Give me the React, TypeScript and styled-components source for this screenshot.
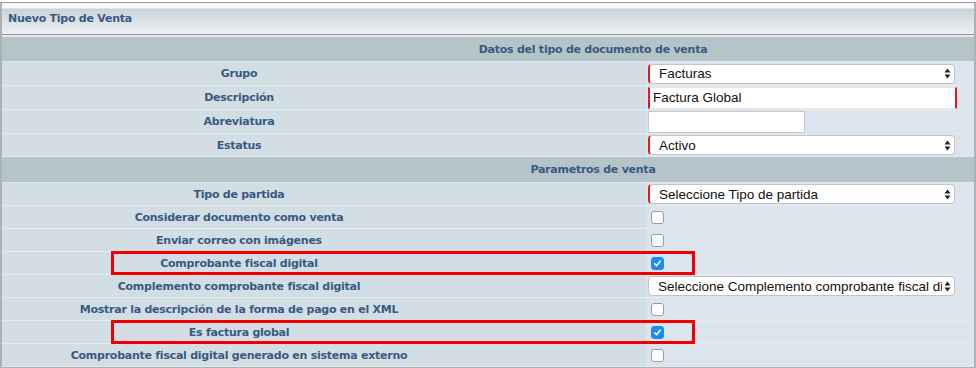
import React from "react";
import styled, { createGlobalStyle } from "styled-components";

const GlobalStyle = createGlobalStyle`
  html, body {
    margin: 0;
    padding: 0;
    background: #ffffff;
  }
  body {
    font-family: "DejaVu Sans", Verdana, sans-serif;
  }
`;

const Frame = styled.div`
  width: 972px;
  margin-top: 2px;
  border-top: 1px solid #9a9a9a;
  border-left: 2px solid #b0b0b0;
  border-right: 2px solid #b0b0b0;
  border-bottom: 2px solid #b0b0b0;
  background: #e4e8ea;
`;

const TitleBar = styled.div`
  height: 31px;
  display: flex;
  align-items: center;
  padding-left: 6px;
  background: linear-gradient(to bottom, #f7f8f8 0px, #f7f8f8 5px, #c9d3d8 6px, #eef1f2 100%);
  border-bottom: 1px solid #8e9599;
  margin-bottom: 2px;
  font-size: 11px;
  font-weight: bold;
  letter-spacing: -0.25px;
  color: #385a83;
`;

const SectionHeader = styled.div<{ $h: number }>`
  height: ${(p) => p.$h}px;
  display: flex;
  align-items: center;
  justify-content: center;
  padding-left: 210px;
  background: #b5c4c9;
  border-bottom: 1px solid #dfe7ec;
  font-size: 11px;
  font-weight: bold;
  letter-spacing: -0.25px;
  color: #385a83;
`;

const Row = styled.div<{ $h: number }>`
  position: relative;
  display: grid;
  grid-template-columns: 644px 1fr;
  height: ${(p) => p.$h}px;
  border-bottom: 1px solid #e4ebf0;
`;

const Label = styled.div`
  display: flex;
  align-items: center;
  justify-content: center;
  padding-right: 170px;
  background: #d2dde4;
  font-size: 11px;
  font-weight: bold;
  letter-spacing: -0.25px;
  color: #385a83;
  white-space: nowrap;
`;

const Value = styled.div`
  display: flex;
  align-items: center;
  padding-left: 2px;
  background: #dce5ed;
`;

const SelectBox = styled.div<{ $required?: boolean }>`
  box-sizing: border-box;
  width: 307px;
  height: 20px;
  display: flex;
  align-items: center;
  justify-content: space-between;
  padding: 0 3px 0 9px;
  background: #ffffff;
  border: 1px solid #c4c4c4;
  border-left: ${(p) => (p.$required ? "2px solid #f0141e" : "1px solid #c4c4c4")};
  border-radius: 4px;
  font-family: "Liberation Sans", Arial, sans-serif;
  font-size: 13.5px;
  color: #111;
  white-space: nowrap;
  overflow: hidden;
`;

const SelectText = styled.span`
  overflow: hidden;
  margin-right: 2px;
`;

const TextInput = styled.div<{ $width: number; $required?: boolean }>`
  box-sizing: border-box;
  width: ${(p) => p.$width}px;
  height: 22px;
  display: flex;
  align-items: center;
  padding-left: 3px;
  background: #ffffff;
  border: 1px solid #c8c8c8;
  ${(p) =>
    p.$required &&
    `border-left: 2px solid #f0141e; border-right: 2px solid #f0141e; border-top: 1px solid #e6e6e6; border-bottom: 1px solid #e6e6e6;`}
  font-family: "Liberation Sans", Arial, sans-serif;
  font-size: 13.5px;
  color: #111;
`;

const Check = styled.span<{ $checked?: boolean }>`
  box-sizing: border-box;
  width: 13px;
  height: 13px;
  margin-left: 3px;
  display: flex;
  align-items: center;
  justify-content: center;
  border-radius: 3px;
  background: ${(p) => (p.$checked ? "#1c8cf5" : "#ffffff")};
  border: 1px solid ${(p) => (p.$checked ? "#1c8cf5" : "#9c9c9c")};
`;

const Highlight = styled.div`
  position: absolute;
  left: 109px;
  top: -1px;
  width: 584px;
  height: 24px;
  box-sizing: border-box;
  border: 3px solid #f00000;
  pointer-events: none;
`;

const Arrows = () => (
  <svg width="7" height="11" viewBox="0 0 7 11" style={{ flexShrink: 0 }}>
    <path d="M3.5 0.5 L6.5 4.5 L0.5 4.5 Z" fill="#222" />
    <path d="M3.5 10.5 L6.5 6.5 L0.5 6.5 Z" fill="#222" />
  </svg>
);

const Select = ({ text, required }: { text: string; required?: boolean }) => (
  <SelectBox $required={required}>
    <SelectText>{text}</SelectText>
    <Arrows />
  </SelectBox>
);

const Checkbox = ({ checked }: { checked?: boolean }) => (
  <Check $checked={checked}>
    {checked && (
      <svg width="9" height="9" viewBox="0 0 9 9">
        <path d="M1.8 4.8 L3.7 6.6 L7.2 2.2" fill="none" stroke="#fff" strokeWidth="1.6" strokeLinecap="round" strokeLinejoin="round" />
      </svg>
    )}
  </Check>
);

type Param = { label: string; kind: "check" | "select"; checked?: boolean; text?: string; required?: boolean; marked?: boolean };

const params: Param[] = [
  { label: "Tipo de partida", kind: "select", text: "Seleccione Tipo de partida", required: true },
  { label: "Considerar documento como venta", kind: "check" },
  { label: "Enviar correo con imágenes", kind: "check" },
  { label: "Comprobante fiscal digital", kind: "check", checked: true, marked: true },
  { label: "Complemento comprobante fiscal digital", kind: "select", text: "Seleccione Complemento comprobante fiscal di" },
  { label: "Mostrar la descripción de la forma de pago en el XML", kind: "check" },
  { label: "Es factura global", kind: "check", checked: true, marked: true },
  { label: "Comprobante fiscal digital generado en sistema externo", kind: "check" },
];

const App: React.FC = () => {
  return (
    <>
      <GlobalStyle />
      <Frame>
        <TitleBar>Nuevo Tipo de Venta</TitleBar>
        <SectionHeader $h={24}>Datos del tipo de documento de venta</SectionHeader>
        <Row $h={23}>
          <Label>Grupo</Label>
          <Value>
            <Select text="Facturas" required />
          </Value>
        </Row>
        <Row $h={23}>
          <Label>Descripción</Label>
          <Value>
            <TextInput $width={309} $required>Factura Global</TextInput>
          </Value>
        </Row>
        <Row $h={23}>
          <Label>Abreviatura</Label>
          <Value>
            <TextInput $width={157} />
          </Value>
        </Row>
        <Row $h={22}>
          <Label>Estatus</Label>
          <Value>
            <Select text="Activo" required />
          </Value>
        </Row>
        <SectionHeader $h={25}>Parametros de venta</SectionHeader>
        {params.map((p) => (
          <Row key={p.label} $h={22}>
            <Label>{p.label}</Label>
            <Value>
              {p.kind === "check" ? <Checkbox checked={p.checked} /> : <Select text={p.text || ""} required={p.required} />}
            </Value>
            {p.marked && <Highlight />}
          </Row>
        ))}
      </Frame>
    </>
  );
};

export default App;
